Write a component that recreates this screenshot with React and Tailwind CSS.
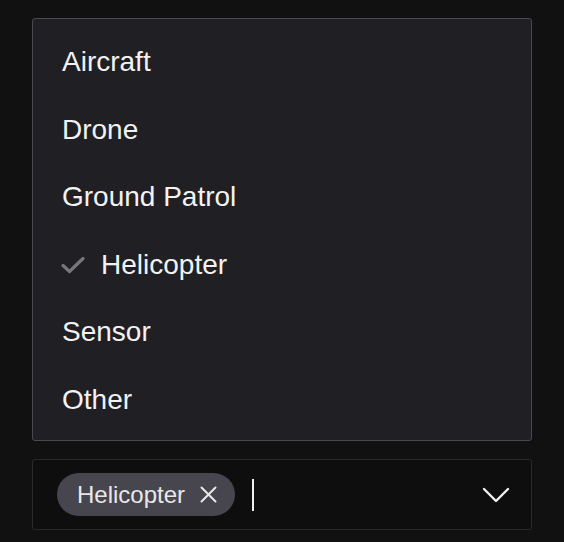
export default function App() {
  const items = ["Aircraft", "Drone", "Ground Patrol", "Helicopter", "Sensor", "Other"];
  return (
    <div className="w-[564px] h-[542px] bg-[#111111] pt-[18px] px-[32px] text-[28px] text-[#f2f2f2]" style={{ fontFamily: '"Liberation Sans", Arial, sans-serif' }}>
      <div className="w-[500px] border border-[#4a4850] bg-[#201f24] rounded-[3px] py-[8px]">
        {items.map((it) => (
          <div key={it} className="h-[67.5px] flex items-center pl-[29px] pt-[3px]">
            {it === "Helicopter" && (
              <svg width="24" height="24" viewBox="0 0 24 24" className="mr-[16px] -ml-[1px]" fill="none">
                <path d="M2 12.5 L8.5 18.5 L22 5.5" stroke="#77767b" strokeWidth="3.2" strokeLinecap="round" strokeLinejoin="round" />
              </svg>
            )}
            <span>{it}</span>
          </div>
        ))}
      </div>
      <div className="mt-[18px] w-[500px] h-[71px] border border-[#2a2a2c] bg-[#0e0e0f] rounded-[3px] flex items-center pl-[24px] pr-[21px]">
        <div className="h-[43px] rounded-full bg-[#47454d] flex items-center pl-[20px] pr-[18px] text-[24px] text-[#e8e8ea]">
          <span>Helicopter</span>
          <svg width="17" height="17" viewBox="0 0 17 17" className="ml-[15px]" fill="none">
            <path d="M1.5 1.5 L15.5 15.5 M15.5 1.5 L1.5 15.5" stroke="#e8e8ea" strokeWidth="2" strokeLinecap="round" />
          </svg>
        </div>
        <div className="ml-[17px] w-[2px] h-[32px] bg-[#f0f0f0]" />
        <div className="flex-1" />
        <svg width="28" height="18" viewBox="0 0 28 18" fill="none">
          <path d="M2 3 L14 15 L26 3" stroke="#f0f0f0" strokeWidth="2.4" strokeLinecap="round" strokeLinejoin="round" />
        </svg>
      </div>
    </div>
  );
}
